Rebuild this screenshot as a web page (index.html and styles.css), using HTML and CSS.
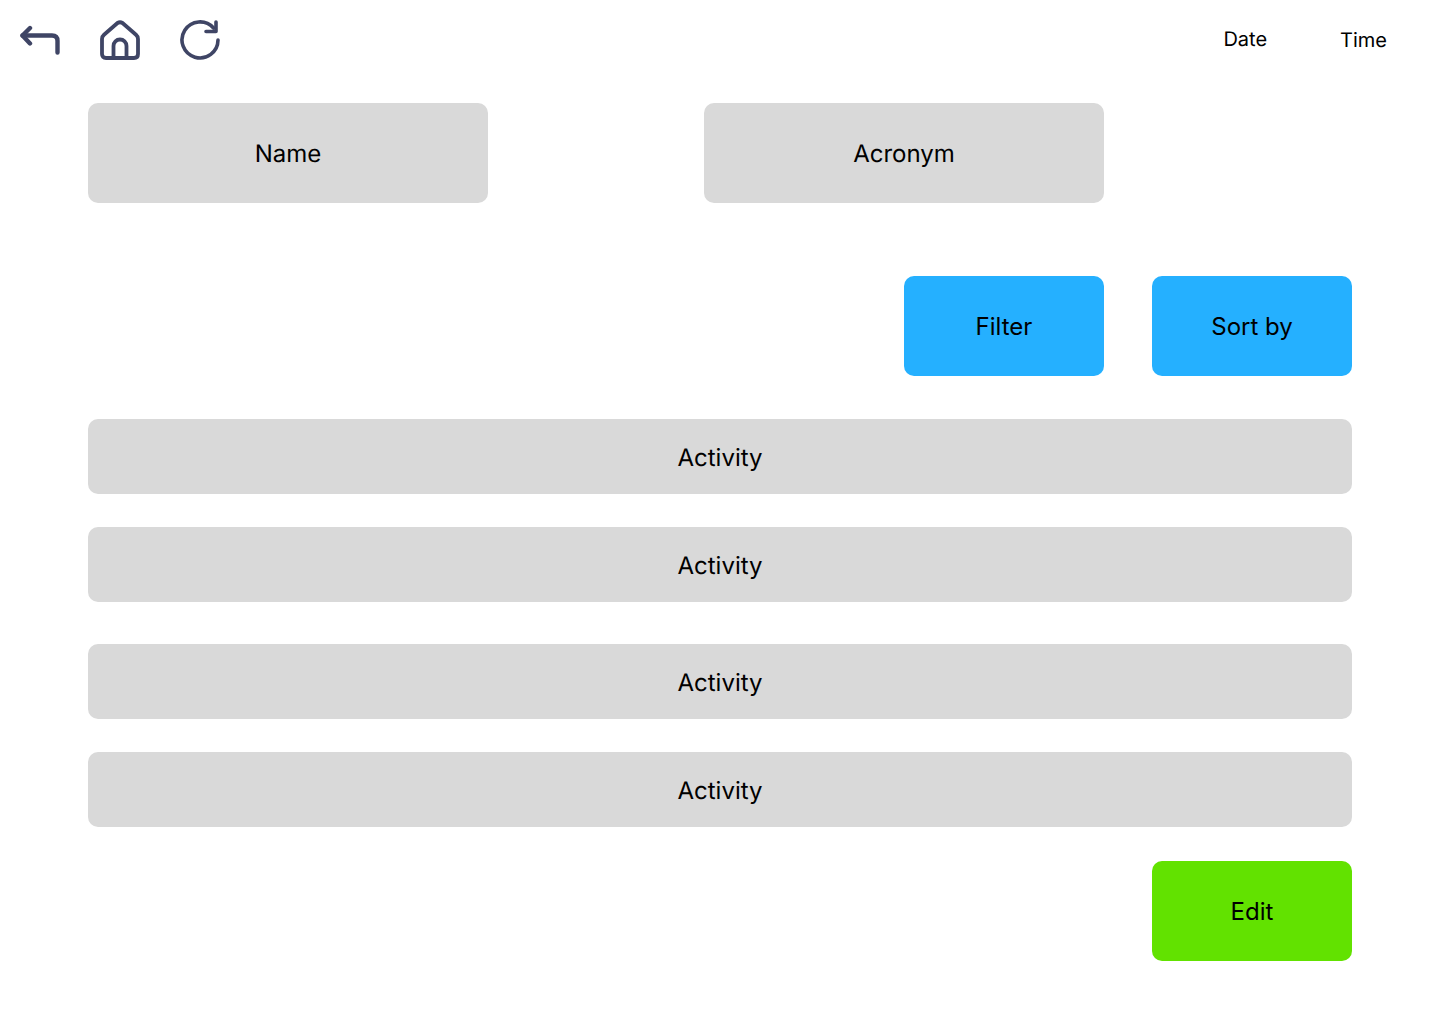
FILE: index.html
```html
<!DOCTYPE html>
<html lang="en">
<head>
    <meta charset="UTF-8">
    <meta name="viewport" content="width=device-width, initial-scale=1.0">
    <title>Activities</title>
    <link rel="stylesheet" href="styles.css">
</head>
<body>
    <header class="topbar">
        <nav class="nav-icons">
            <svg class="icon icon-back" viewBox="0 0 40 40" aria-label="Back">
                <path d="M10 8 L2.5 15.5 L10 23.5"/>
                <path d="M2.5 15.5 H32 Q37.5 15.5 37.5 21 V32.5"/>
            </svg>
            <svg class="icon icon-home" viewBox="0 0 40 40" aria-label="Home">
                <path d="M2 19 Q2 16.5 4 14.8 L17.5 3 Q20 1.5 22.5 3 L36 14.8 Q38 16.5 38 19 V34 Q38 38 34 38 H6 Q2 38 2 34 Z"/>
                <path d="M13.5 38 V26 a6.5 6.5 0 0 1 13 0 V38"/>
            </svg>
            <svg class="icon" viewBox="0 0 40 40" aria-label="Refresh">
                <path d="M38 20 A18 18 0 1 1 33.5 8"/>
                <path d="M36 2 V11.5 H26"/>
            </svg>
        </nav>
        <div class="datetime">
            <span class="date">Date</span>
            <span class="time">Time</span>
        </div>
    </header>

    <main class="content">
        <div class="identity">
            <div class="box identity-box">Name</div>
            <div class="box identity-box">Acronym</div>
        </div>

        <div class="controls">
            <button class="box action blue">Filter</button>
            <button class="box action blue">Sort by</button>
        </div>

        <div class="activities">
            <div class="box activity">Activity</div>
            <div class="box activity">Activity</div>
            <div class="box activity activity-spaced">Activity</div>
            <div class="box activity">Activity</div>
        </div>

        <div class="footer-actions">
            <button class="box action green">Edit</button>
        </div>
    </main>
</body>
</html>
```

FILE: styles.css
```css
* {
    box-sizing: border-box;
}
body {
    margin: 0;
    background-color: white;
    color: black;
    font-family: Inter, sans-serif;
    text-rendering: geometricPrecision;
}
.topbar {
    display: flex;
    justify-content: space-between;
    align-items: center;
    height: 80px;
    padding: 0 53px 0 20px;
}
.nav-icons {
    display: flex;
    gap: 40px;
}
.icon {
    display: block;
    width: 40px;
    height: 40px;
    fill: none;
    stroke: #3f4565;
    stroke-width: 3.6;
    stroke-linecap: round;
    stroke-linejoin: round;
}
.icon-back {
    stroke-width: 4.4;
}
.icon-home {
    stroke-width: 3.8;
}
.datetime {
    display: flex;
    gap: 74px;
    margin-bottom: 2px;
    font-size: 20px;
}
.date {
    margin-right: -1px;
}
.time {
    padding-top: 1px;
}
.content {
    padding: 23px 88px 0;
}
.box {
    display: flex;
    align-items: center;
    justify-content: center;
    border: none;
    border-radius: 10px;
    background-color: #d9d9d9;
    color: black;
    font-family: inherit;
    font-size: 24px;
}
.identity {
    display: flex;
    gap: 216px;
}
.identity-box {
    width: 400px;
    height: 100px;
}
.controls {
    display: flex;
    justify-content: flex-end;
    gap: 48px;
    margin-top: 73px;
}
.action {
    width: 200px;
    height: 100px;
}
.blue {
    background-color: #25b0ff;
}
.green {
    background-color: #62e200;
}
.activities {
    display: flex;
    flex-direction: column;
    gap: 33px;
    margin-top: 43px;
}
.activity {
    height: 75px;
    padding-top: 1px;
}
.activity-spaced {
    margin-top: 9px;
}
.footer-actions {
    display: flex;
    justify-content: flex-end;
    margin-top: 34px;
}
```
